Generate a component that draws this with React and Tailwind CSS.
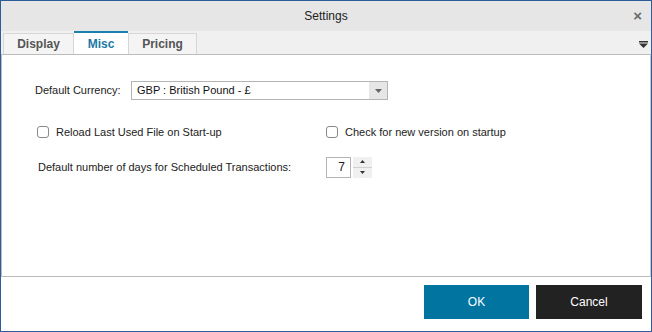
import { useState } from 'react';

const font = { fontFamily: '"Liberation Sans", Arial, sans-serif' };

function Tab({ label, active, w }) {
  return active ? (
    <div className={`${w} h-[23px] flex items-center justify-center bg-white border-t-2 border-[#1b7fae] text-[#1b79a6] text-[12px] font-bold`}>
      {label}
    </div>
  ) : (
    <div className={`${w} h-[21px] mt-[2px] flex items-center justify-center bg-[#f4f4f4] border border-b-0 border-[#d6d6d6] text-[#555] text-[12px] font-bold`}>
      {label}
    </div>
  );
}

function Check({ label }) {
  const [on, setOn] = useState(false);
  return (
    <label className="flex items-center gap-[7px] cursor-default" onClick={() => setOn(!on)}>
      <span className="w-[12px] h-[12px] rounded-[3px] border border-[#8a8a8a] bg-white" />
      <span className="text-[11px] text-[#222] whitespace-nowrap">{label}</span>
    </label>
  );
}

export default function App() {
  return (
    <div className="w-[652px] h-[332px] border border-[#2f5d9c] bg-white flex flex-col" style={font}>
      {/* Title bar */}
      <div className="h-[30px] bg-[#e6e6e6] relative flex items-center justify-center shrink-0">
        <span className="text-[12px] text-[#222]">Settings</span>
        <span className="absolute right-[9px] top-[7px] text-[15px] font-bold text-[#6b6b6b] leading-none">×</span>
      </div>

      {/* Tabs */}
      <div className="h-[23px] bg-[#f0f0f0] flex items-end pl-[2px] relative shrink-0">
        <Tab label="Display" w="w-[71px]" />
        <Tab label="Misc" w="w-[54px]" active />
        <Tab label="Pricing" w="w-[69px]" />
        <svg className="absolute right-[3px] top-[10px]" width="9" height="7" viewBox="0 0 9 7">
          <rect x="0" y="0" width="9" height="1.5" fill="#333" />
          <path d="M0 2.5 H9 L4.5 7 Z" fill="#333" />
        </svg>
      </div>

      {/* Panel */}
      <div className="h-[223px] border border-[#bcbcbc] border-r-[#c8c8c8] shrink-0 pt-[26px] pl-[33px] text-[11px] text-[#222]">
        <div className="flex items-center">
          <span className="w-[96px] whitespace-nowrap">Default Currency:</span>
          <div className="w-[257px] h-[19px] border border-[#b4b4b4] flex items-center">
            <span className="flex-1 pl-[5px] text-[11px] text-[#111] whitespace-nowrap">GBP : British Pound - £</span>
            <span className="w-[18px] h-full bg-[#e6e6e6] flex items-center justify-center">
              <svg width="7" height="4" viewBox="0 0 7 4"><path d="M0 0 H7 L3.5 4 Z" fill="#666" /></svg>
            </span>
          </div>
        </div>

        <div className="flex mt-[24px] pl-[2px]">
          <div className="w-[289px]">
            <Check label="Reload Last Used File on Start-up" />
          </div>
          <Check label="Check for new version on startup" />
        </div>

        <div className="flex items-center mt-[16px] pl-[3px]">
          <span className="w-[288px] whitespace-nowrap">Default number of days for Scheduled Transactions:</span>
          <div className="w-[25px] h-[21px] border border-[#b4b4b4] flex items-center justify-end pr-[5px] text-[12px]">7</div>
          <div className="ml-[2px] w-[19px] h-[21px] flex flex-col">
            <span className="flex-1 bg-[#f0f0f0] flex items-center justify-center border-b border-[#d0d0d0]">
              <svg width="5" height="3" viewBox="0 0 5 3"><path d="M0 3 H5 L2.5 0 Z" fill="#333" /></svg>
            </span>
            <span className="flex-1 bg-[#f0f0f0] flex items-center justify-center">
              <svg width="5" height="3" viewBox="0 0 5 3"><path d="M0 0 H5 L2.5 3 Z" fill="#333" /></svg>
            </span>
          </div>
        </div>
      </div>

      {/* Footer */}
      <div className="flex-1 flex justify-end items-start gap-[7px] pt-[8px] pr-[9px]">
        <button className="w-[105px] h-[34px] bg-[#0174a0] text-white text-[12px]">OK</button>
        <button className="w-[106px] h-[34px] bg-[#222222] text-white text-[12px]">Cancel</button>
      </div>
    </div>
  );
}
